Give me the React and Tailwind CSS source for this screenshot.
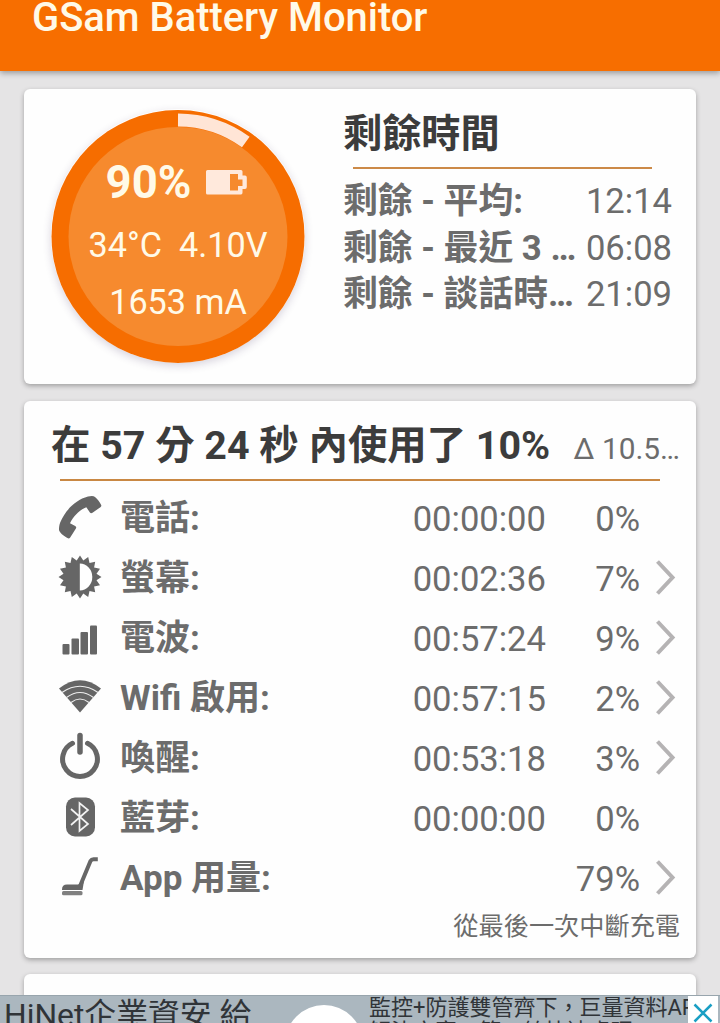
// App.jsx
import React from "react";

const PhoneIcon = () => (
    <svg width="44" height="44" viewBox="0 0 44 44" fill="#666">
        <path d="M1 34.5 C1 32 1.3 30 2.2 27.5 C7 16 17 5 30 1.6 C33 .8 35.5 .7 37 2 C39.500 4 42 7.500 43.200 10 C43.600 11 43.200 11.700 42.400 12.200 L34.500 17.700 C33.500 18.400 32.600 18.300 31.900 17.400 L28.300 12.200 C22 14.500 15 21.500 12 28.300 L17.200 31 C18.300 31.600 18.500 32.500 17.900 33.500 L12.200 42.500 C11.500 43.500 10.500 43.700 9.500 43.100 C6 41 1 37.500 1 34.500 Z" />
    </svg>
);

const BrightnessIcon = () => (
    <svg width="44" height="44" viewBox="0 0 44 44">
        <path
            fill="#666"
            d="M22 .5L25.300 5.500L30.200 2L31.500 7.900L37.200 6.800L36.100 12.500L42 13.800L38.500 18.700L43.500 22L38.500 25.300L42 30.200L36.100 31.500L37.200 37.200L31.500 36.100L30.200 42L25.300 38.500L22 43.500L18.700 38.500L13.800 42L12.500 36.100L6.800 37.200L7.900 31.500L2 30.200L5.500 25.300L.5 22L5.500 18.700L2 13.800L7.900 12.500L6.800 6.800L12.500 7.900L13.800 2L18.700 5.500Z"
        />
        <path fill="#fff" d="M21.800 8.500A12.500 13.500 0 0 1 21.800 35.500Z" />
    </svg>
);

const SignalIcon = () => (
    <svg width="44" height="44" viewBox="0 0 44 44" fill="#666">
        <rect x="4.500" y="29" width="7" height="10.500" rx="1" />
        <rect x="13.500" y="23.500" width="7.500" height="16" rx="1" />
        <rect x="22.500" y="17" width="7.500" height="22.500" rx="1" />
        <rect x="32" y="10.500" width="7" height="29" rx="1" />
    </svg>
);

const WifiIcon = () => (
    <svg width="44" height="44" viewBox="0 0 44 44" fill="none">
        <path fill="#666" d="M1 13.500Q22 -3 43 13.500L22 37.500Z" />
        <path stroke="#eee" strokeWidth="1.200" d="M4 17.500Q22 5 40 17.500M8.500 22.500Q22 12.500 35.500 22.500M13 27.500Q22 20.500 31 27.500" />
    </svg>
);

const PowerIcon = () => (
    <svg className="-mt-[5px]" width="44" height="48" viewBox="0 0 44 48" fill="none" stroke="#666" strokeLinecap="round">
        <path strokeWidth="5" d="M14.500 12.300A17.400 17.400 0 1 0 29.500 12.300" />
        <path strokeWidth="5.500" d="M22 4.500V21" />
    </svg>
);

const BluetoothIcon = () => (
    <svg width="44" height="44" viewBox="0 0 44 44" fill="none">
        <rect x="8" y="2.500" width="29" height="39" rx="9" fill="#666" />
        <path stroke="#f3f3f3" strokeWidth="1.700" d="M13 14L30 29L21.500 36V8L30 15L13 30" />
    </svg>
);

const VacuumIcon = () => (
    <svg width="44" height="44" viewBox="0 0 44 44" fill="none">
        <path stroke="#666" strokeWidth="4" strokeLinejoin="round" d="M22.500 30L32.500 6Q33.500 4.300 35.500 4.300H39.800" />
        <path fill="#666" d="M4 34.500Q4 29.500 9 29.500H20L26 26L24.500 35H4Z" />
        <rect x="4" y="36" width="20.500" height="4.200" rx="1.500" fill="#808080" />
    </svg>
);

const ChevronIcon = () => (
    <svg width="20" height="36" viewBox="0 0 20 36" fill="none" stroke="#b5b3b4" strokeWidth="4">
        <path d="M1.500 1.500L16.500 17.500L1.500 33.500" />
    </svg>
);

const BatteryIcon = () => (
    <svg width="41" height="26" viewBox="0 0 41 26">
        <path
            fill="#ffe9dc"
            fillRule="evenodd"
            d="M1.500 0H35Q36.500 0 36.500 1.500V5.500H39Q40.800 5.500 40.800 7.500V17Q40.800 19 39 19H36.500V22.500Q36.500 24.500 35 24.500H1.500Q0 24.500 0 23V1.500Q0 0 1.500 0ZM24 4V20.500H32V16H36.500V9.500H32V4Z"
        />
    </svg>
);

const remaining = [
    { label: "剩餘 - 平均:", value: "12:14" },
    { label: "剩餘 - 最近 3 …", value: "06:08" },
    { label: "剩餘 - 談話時…", value: "21:09" },
];

const usage = [
    { key: "phone", icon: PhoneIcon, label: "電話:", time: "00:00:00", percent: "0%", link: false },
    { key: "screen", icon: BrightnessIcon, label: "螢幕:", time: "00:02:36", percent: "7%", link: true },
    { key: "radio", icon: SignalIcon, label: "電波:", time: "00:57:24", percent: "9%", link: true },
    { key: "wifi", icon: WifiIcon, label: "Wifi 啟用:", time: "00:57:15", percent: "2%", link: true },
    { key: "awake", icon: PowerIcon, label: "喚醒:", time: "00:53:18", percent: "3%", link: true },
    { key: "bluetooth", icon: BluetoothIcon, label: "藍芽:", time: "00:00:00", percent: "0%", link: false },
    { key: "apps", icon: VacuumIcon, label: "App 用量:", time: "", percent: "79%", link: true },
];

const Gauge = () => (
    <div className="grid h-[254px] w-[254px] shrink-0 rounded-full shadow-[0_3px_8px_rgba(60,40,90,0.2)]">
        <svg className="col-start-1 row-start-1" width="254" height="254" viewBox="0 0 254 254">
            <circle cx="127" cy="127.500" r="126.500" fill="#f66d00" />
            <circle cx="127" cy="127.500" r="109.500" fill="#f68a2e" />
            <path d="M127 11A116.500 116.500 0 0 1 194.800 33" fill="none" stroke="#ffe5d6" strokeWidth="13" />
        </svg>
        <div className="z-10 col-start-1 row-start-1 flex flex-col items-center pt-[44px] text-[#fffae8]">
            <div className="flex h-[60px] items-center gap-[15px] pr-[3px] text-[45.500px] font-bold">
                <span>90%</span>
                <BatteryIcon />
            </div>
            <div className="flex h-[66px] items-center gap-[17px] text-[34.200px]">
                <span>34°C</span>
                <span>4.10V</span>
            </div>
            <div className="flex h-[48px] items-center text-[34.200px]">1653 mA</div>
        </div>
    </div>
);

const UsageRow = ({ item }) => {
    const Icon = item.icon;

    return (
        <div className="flex h-[60px] items-center">
            <div className="flex w-[62px] shrink-0 items-center pb-[2px]">
                <Icon />
            </div>
            <span className="flex-1 pt-px text-[35px] font-bold">{item.label}</span>
            <span className="w-[134px] pt-px text-right">{item.time}</span>
            <span className="w-[94px] pt-px text-right">{item.percent}</span>
            <div className="ml-4 w-[24px]">{item.link && <ChevronIcon />}</div>
        </div>
    );
};

const Card = ({ className, children }) => (
    <section className={`mx-6 shrink-0 rounded-[6px] bg-[#fefefe] shadow-[0_2px_5px_rgba(0,0,0,0.3)] ${className}`}>
        {children}
    </section>
);

const App = () => {
    return (
        <div className="relative flex h-[1023px] w-[720px] flex-col overflow-hidden bg-[#e5e4e5] font-['Roboto','Noto_Sans_CJK_TC',sans-serif] text-[#6c6c6c]">
            <header className="z-10 flex h-[71px] shrink-0 items-start bg-[#f76e00] pl-8 shadow-[0_2px_6px_rgba(0,0,0,0.35)]">
                <h1 className="-mt-[8px] text-[39.900px] leading-[52px] font-medium whitespace-nowrap text-[#fffae8]">
                    GSam Battery Monitor
                </h1>
            </header>

            <Card className="mt-[18px] flex h-[295px] pt-[20px] pl-[27px]">
                <Gauge />
                <div className="ml-[38px] w-[329px]">
                    <h2 className="h-[58px] pt-px text-[39.200px] leading-[49px] font-bold text-[#3c3c3c]">剩餘時間</h2>
                    <div className="mr-[20px] ml-[10px] h-[2px] bg-[#cc8a48]" />
                    <div className="pt-[9px] text-[34.600px]">
                        {remaining.map((row) => (
                            <div key={row.label} className="flex h-[46.500px] items-center justify-between leading-[46px] whitespace-nowrap">
                                <span className="text-[34.800px] font-bold">{row.label}</span>
                                <span>{row.value}</span>
                            </div>
                        ))}
                    </div>
                </div>
            </Card>

            <Card className="mt-[17px] h-[557px] pt-[18px] pr-4 pl-[27px]">
                <div className="flex h-[60px] items-baseline justify-between leading-[53px] whitespace-nowrap">
                    <h2 className="text-[39.400px] font-bold text-[#3c3c3c]">在 57 分 24 秒 內使用了 10%</h2>
                    <span className="text-[29.800px]">Δ 10.5…</span>
                </div>
                <div className="mr-5 ml-[9px] h-[2px] bg-[#c98843]" />
                <div className="pt-[7px] pl-[7px] text-[34.600px] leading-[50px]">
                    {usage.map((item) => (
                        <UsageRow key={item.key} item={item} />
                    ))}
                </div>
                <p className="pt-px text-right text-[25.200px] leading-[36px]">從最後一次中斷充電</p>
            </Card>

            <Card className="mt-4 h-[80px]" />

            {/* ad banner pinned over the last card */}
            <aside className="absolute inset-x-0 bottom-0 z-20 flex h-[28px] items-start overflow-hidden border-t border-[#98a5ad] bg-[#abb7bf] text-[#303438]">
                <span className="ml-1 w-[281px] shrink-0 text-[31.800px] leading-[38px] whitespace-nowrap">HiNet企業資安 給</span>
                <span className="mt-[9px] h-[78px] w-[78px] shrink-0 rounded-full bg-white" />
                <div className="ml-[6px] w-[319px] shrink-0 overflow-hidden text-[22px] leading-[24px] whitespace-nowrap">
                    <p>監控+防護雙管齊下，巨量資料API</p>
                    <p>解決方案，第一線快速處理</p>
                </div>
                <button className="flex h-[34px] w-[30px] shrink-0 items-center justify-center bg-white" type="button">
                    <svg width="20" height="20" viewBox="0 0 20 20" stroke="#1a9fc4" strokeWidth="2.500">
                        <path d="M1.500 1.500L18.500 18.500M18.500 1.500L1.500 18.500" />
                    </svg>
                </button>
            </aside>
        </div>
    );
};

export default App;
